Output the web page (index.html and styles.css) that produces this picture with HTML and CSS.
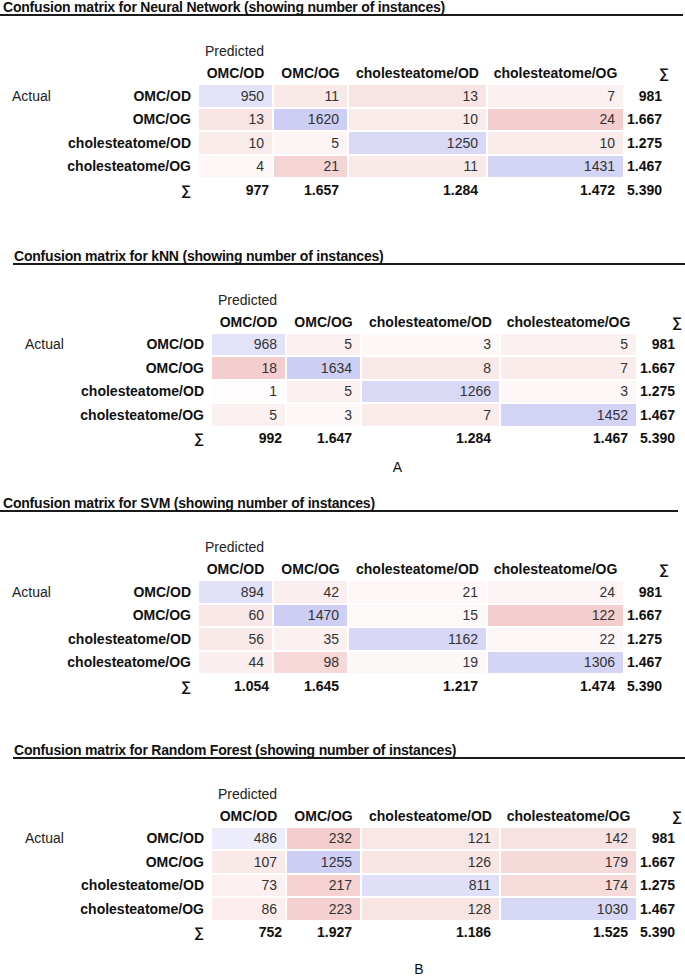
FILE: index.html
```html
<!DOCTYPE html>
<html lang="en">
<head>
<meta charset="utf-8">
<title>Confusion matrices</title>
<link rel="stylesheet" href="styles.css">
</head>
<body>
<main class="figure">

  <section class="panel panel--first">
    <h2 class="panel__title">Confusion matrix for Neural Network (showing number of instances)</h2>
    <div class="cm">
      <div></div><div></div><div class="cm__pred">Predicted</div><div></div>
      <div></div><div></div>
      <div class="cm__head">OMC/OD</div><div class="cm__head">OMC/OG</div><div class="cm__head">cholesteatome/OD</div><div class="cm__head">cholesteatome/OG</div><div class="cm__head cm__head--sum">∑</div>

      <div class="cm__actual">Actual</div><div class="cm__label">OMC/OD</div>
      <div class="cm__cell" style="background:hsl(240,63%,93.1%)">950</div>
      <div class="cm__cell" style="background:hsl(0,63%,94.6%)">11</div>
      <div class="cm__cell" style="background:hsl(0,63%,93.6%)">13</div>
      <div class="cm__cell" style="background:hsl(0,63%,96.6%)">7</div>
      <div class="cm__sum">981</div>

      <div></div><div class="cm__label">OMC/OG</div>
      <div class="cm__cell" style="background:hsl(0,63%,93.6%)">13</div>
      <div class="cm__cell" style="background:hsl(240,63%,88.2%)">1620</div>
      <div class="cm__cell" style="background:hsl(0,63%,95.1%)">10</div>
      <div class="cm__cell" style="background:hsl(0,63%,88.2%)">24</div>
      <div class="cm__sum">1.667</div>

      <div></div><div class="cm__label">cholesteatome/OD</div>
      <div class="cm__cell" style="background:hsl(0,63%,95.1%)">10</div>
      <div class="cm__cell" style="background:hsl(0,63%,97.5%)">5</div>
      <div class="cm__cell" style="background:hsl(240,63%,90.9%)">1250</div>
      <div class="cm__cell" style="background:hsl(0,63%,95.1%)">10</div>
      <div class="cm__sum">1.275</div>

      <div></div><div class="cm__label">cholesteatome/OG</div>
      <div class="cm__cell" style="background:hsl(0,63%,98%)">4</div>
      <div class="cm__cell" style="background:hsl(0,63%,89.7%)">21</div>
      <div class="cm__cell" style="background:hsl(0,63%,94.6%)">11</div>
      <div class="cm__cell" style="background:hsl(240,63%,89.6%)">1431</div>
      <div class="cm__sum">1.467</div>

      <div></div><div class="cm__label">∑</div>
      <div class="cm__sum">977</div><div class="cm__sum">1.657</div><div class="cm__sum">1.284</div><div class="cm__sum">1.472</div><div class="cm__sum">5.390</div>
    </div>
  </section>

  <section class="panel panel--inset panel--second">
    <h2 class="panel__title">Confusion matrix for kNN (showing number of instances)</h2>
    <div class="cm">
      <div></div><div></div><div class="cm__pred">Predicted</div><div></div>
      <div></div><div></div>
      <div class="cm__head">OMC/OD</div><div class="cm__head">OMC/OG</div><div class="cm__head">cholesteatome/OD</div><div class="cm__head">cholesteatome/OG</div><div class="cm__head cm__head--sum">∑</div>

      <div class="cm__actual">Actual</div><div class="cm__label">OMC/OD</div>
      <div class="cm__cell" style="background:hsl(240,63%,93%)">968</div>
      <div class="cm__cell" style="background:hsl(0,63%,96.7%)">5</div>
      <div class="cm__cell" style="background:hsl(0,63%,98%)">3</div>
      <div class="cm__cell" style="background:hsl(0,63%,96.7%)">5</div>
      <div class="cm__sum">981</div>

      <div></div><div class="cm__label">OMC/OG</div>
      <div class="cm__cell" style="background:hsl(0,63%,88.2%)">18</div>
      <div class="cm__cell" style="background:hsl(240,63%,88.2%)">1634</div>
      <div class="cm__cell" style="background:hsl(0,63%,94.8%)">8</div>
      <div class="cm__cell" style="background:hsl(0,63%,95.4%)">7</div>
      <div class="cm__sum">1.667</div>

      <div></div><div class="cm__label">cholesteatome/OD</div>
      <div class="cm__cell" style="background:hsl(0,63%,99.3%)">1</div>
      <div class="cm__cell" style="background:hsl(0,63%,96.7%)">5</div>
      <div class="cm__cell" style="background:hsl(240,63%,90.9%)">1266</div>
      <div class="cm__cell" style="background:hsl(0,63%,98%)">3</div>
      <div class="cm__sum">1.275</div>

      <div></div><div class="cm__label">cholesteatome/OG</div>
      <div class="cm__cell" style="background:hsl(0,63%,96.7%)">5</div>
      <div class="cm__cell" style="background:hsl(0,63%,98%)">3</div>
      <div class="cm__cell" style="background:hsl(0,63%,95.4%)">7</div>
      <div class="cm__cell" style="background:hsl(240,63%,89.5%)">1452</div>
      <div class="cm__sum">1.467</div>

      <div></div><div class="cm__label">∑</div>
      <div class="cm__sum">992</div><div class="cm__sum">1.647</div><div class="cm__sum">1.284</div><div class="cm__sum">1.467</div><div class="cm__sum">5.390</div>
    </div>
  </section>

  <p class="caption caption--a">A</p>

  <section class="panel panel--third">
    <h2 class="panel__title">Confusion matrix for SVM (showing number of instances)</h2>
    <div class="cm">
      <div></div><div></div><div class="cm__pred">Predicted</div><div></div>
      <div></div><div></div>
      <div class="cm__head">OMC/OD</div><div class="cm__head">OMC/OG</div><div class="cm__head">cholesteatome/OD</div><div class="cm__head">cholesteatome/OG</div><div class="cm__head cm__head--sum">∑</div>

      <div class="cm__actual">Actual</div><div class="cm__label">OMC/OD</div>
      <div class="cm__cell" style="background:hsl(240,63%,92.8%)">894</div>
      <div class="cm__cell" style="background:hsl(0,63%,96%)">42</div>
      <div class="cm__cell" style="background:hsl(0,63%,98%)">21</div>
      <div class="cm__cell" style="background:hsl(0,63%,97.7%)">24</div>
      <div class="cm__sum">981</div>

      <div></div><div class="cm__label">OMC/OG</div>
      <div class="cm__cell" style="background:hsl(0,63%,94.2%)">60</div>
      <div class="cm__cell" style="background:hsl(240,63%,88.2%)">1470</div>
      <div class="cm__cell" style="background:hsl(0,63%,98.6%)">15</div>
      <div class="cm__cell" style="background:hsl(0,63%,88.2%)">122</div>
      <div class="cm__sum">1.667</div>

      <div></div><div class="cm__label">cholesteatome/OD</div>
      <div class="cm__cell" style="background:hsl(0,63%,94.6%)">56</div>
      <div class="cm__cell" style="background:hsl(0,63%,96.6%)">35</div>
      <div class="cm__cell" style="background:hsl(240,63%,90.7%)">1162</div>
      <div class="cm__cell" style="background:hsl(0,63%,97.9%)">22</div>
      <div class="cm__sum">1.275</div>

      <div></div><div class="cm__label">cholesteatome/OG</div>
      <div class="cm__cell" style="background:hsl(0,63%,95.8%)">44</div>
      <div class="cm__cell" style="background:hsl(0,63%,90.6%)">98</div>
      <div class="cm__cell" style="background:hsl(0,63%,98.2%)">19</div>
      <div class="cm__cell" style="background:hsl(240,63%,89.6%)">1306</div>
      <div class="cm__sum">1.467</div>

      <div></div><div class="cm__label">∑</div>
      <div class="cm__sum">1.054</div><div class="cm__sum">1.645</div><div class="cm__sum">1.217</div><div class="cm__sum">1.474</div><div class="cm__sum">5.390</div>
    </div>
  </section>

  <section class="panel panel--inset panel--fourth">
    <h2 class="panel__title">Confusion matrix for Random Forest (showing number of instances)</h2>
    <div class="cm">
      <div></div><div></div><div class="cm__pred">Predicted</div><div></div>
      <div></div><div></div>
      <div class="cm__head">OMC/OD</div><div class="cm__head">OMC/OG</div><div class="cm__head">cholesteatome/OD</div><div class="cm__head">cholesteatome/OG</div><div class="cm__head cm__head--sum">∑</div>

      <div class="cm__actual">Actual</div><div class="cm__label">OMC/OD</div>
      <div class="cm__cell" style="background:hsl(240,63%,95.4%)">486</div>
      <div class="cm__cell" style="background:hsl(0,63%,88.2%)">232</div>
      <div class="cm__cell" style="background:hsl(0,63%,93.9%)">121</div>
      <div class="cm__cell" style="background:hsl(0,63%,92.8%)">142</div>
      <div class="cm__sum">981</div>

      <div></div><div class="cm__label">OMC/OG</div>
      <div class="cm__cell" style="background:hsl(0,63%,94.6%)">107</div>
      <div class="cm__cell" style="background:hsl(240,63%,88.2%)">1255</div>
      <div class="cm__cell" style="background:hsl(0,63%,93.6%)">126</div>
      <div class="cm__cell" style="background:hsl(0,63%,90.9%)">179</div>
      <div class="cm__sum">1.667</div>

      <div></div><div class="cm__label">cholesteatome/OD</div>
      <div class="cm__cell" style="background:hsl(0,63%,96.3%)">73</div>
      <div class="cm__cell" style="background:hsl(0,63%,89%)">217</div>
      <div class="cm__cell" style="background:hsl(240,63%,92.4%)">811</div>
      <div class="cm__cell" style="background:hsl(0,63%,91.2%)">174</div>
      <div class="cm__sum">1.275</div>

      <div></div><div class="cm__label">cholesteatome/OG</div>
      <div class="cm__cell" style="background:hsl(0,63%,95.6%)">86</div>
      <div class="cm__cell" style="background:hsl(0,63%,88.7%)">223</div>
      <div class="cm__cell" style="background:hsl(0,63%,93.5%)">128</div>
      <div class="cm__cell" style="background:hsl(240,63%,90.3%)">1030</div>
      <div class="cm__sum">1.467</div>

      <div></div><div class="cm__label">∑</div>
      <div class="cm__sum">752</div><div class="cm__sum">1.927</div><div class="cm__sum">1.186</div><div class="cm__sum">1.525</div><div class="cm__sum">5.390</div>
    </div>
  </section>

  <p class="caption caption--b">B</p>
</main>
</body>
</html>
```

FILE: styles.css
```css
html, body {
  margin: 0;
  padding: 0;
  background: #ffffff;
}

body {
  width: 685px;
  font-family: "Liberation Sans", Arial, sans-serif;
  color: #111;
}

.figure {
  display: flex;
  flex-direction: column;
}

.panel {
  width: 683px;
}

.panel--inset {
  margin-left: 13px;
  width: 672px;
}

.panel--second { margin-top: 48px; }
.panel--third { margin-top: 21px; width: 678px; }
.panel--fourth { margin-top: 46px; }

.panel__title {
  margin: 0;
  padding-left: 3px;
  font-size: 14px;
  letter-spacing: -0.2px;
  line-height: 14px;
  font-weight: 700;
  color: #111;
  border-bottom: 2px solid #1a1a1a;
  white-space: nowrap;
}

.panel--inset .panel__title {
  padding-left: 1px;
}

.cm {
  margin-top: 25px;
  display: grid;
  grid-template-columns: 60px 135px 73px 73px 137px 135px 45px;
  grid-template-rows: 20px 20px repeat(5, 21.5px);
  column-gap: 2px;
  row-gap: 2px;
  font-size: 14px;
}

.cm > div {
  display: flex;
  align-items: center;
  white-space: nowrap;
}

.cm__pred {
  grid-column: span 4;
  padding-left: 6px;
  color: #222;
}

.cm__head {
  justify-content: center;
  font-weight: 700;
  color: #111;
}

.cm__head--sum {
  justify-content: flex-end;
  padding-right: 1px;
}

.cm__actual {
  padding-left: 12px;
  color: #222;
}

.cm__label {
  justify-content: flex-end;
  padding-right: 6px;
  font-weight: 700;
  color: #111;
}

.cm__cell {
  justify-content: flex-end;
  padding-right: 8px;
  color: #333;
}

.cm__sum {
  justify-content: flex-end;
  padding-right: 8px;
  font-weight: 700;
  color: #111;
}

.cm__sum:nth-child(7n) {
  padding-right: 3px;
}

.caption {
  margin: 0;
  text-align: center;
  font-size: 14px;
  line-height: 16px;
  color: #111;
  font-family: "Liberation Sans", Arial, sans-serif;
}

.caption--a {
  margin-top: 10px;
  padding-left: 110px;
}

.caption--b {
  margin-top: 18px;
  padding-left: 153px;
}
```
